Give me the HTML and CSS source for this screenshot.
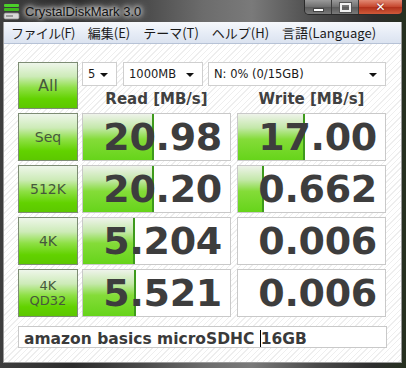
FILE: index.html
```html
<!DOCTYPE html>
<html lang="ja">
<head>
  <meta charset="UTF-8">
  <title>CrystalDiskMark 3.0</title>
  <link rel="stylesheet" href="styles.css">
</head>
<body>
  <div class="window">
    <div class="titlebar">
      <svg class="app-icon" width="17" height="17" viewBox="0 0 17 17">
        <rect x="1" y="1" width="15" height="3" rx="1" fill="#4ccf2a"/>
        <rect x="1" y="5" width="15" height="3" rx="1" fill="#3fb81e"/>
        <rect x="1" y="10" width="15" height="6" rx="1.5" fill="#d8d8d8" stroke="#8a8a8a" stroke-width="0.8"/>
        <rect x="3" y="12" width="7" height="2" fill="#9a9a9a"/>
      </svg>
      <span class="title">CrystalDiskMark 3.0</span>
      <div class="caption">
        <span class="cb min"><i></i></span>
        <span class="cb max"><i></i></span>
        <span class="cb close">✕</span>
      </div>
    </div>

    <div class="client">
      <ul class="menubar">
        <li class="first">ファイル(F)</li>
        <li>編集(E)</li>
        <li>テーマ(T)</li>
        <li>ヘルプ(H)</li>
        <li>言語(Language)</li>
      </ul>

      <div class="panel">
        <button class="test all">All</button>
        <div class="selects">
          <div class="select s-count">5<span class="arrow"></span></div>
          <div class="select s-size">1000MB<span class="arrow"></span></div>
          <div class="select s-drive">N: 0% (0/15GB)<span class="arrow"></span></div>
        </div>
        <div class="col-head read-head">Read [MB/s]</div>
        <div class="col-head write-head">Write [MB/s]</div>

        <button class="test">Seq</button>
        <div class="result"><span class="bar" style="width:47%"></span><span class="num">20.98</span></div>
        <div class="result write"><span class="bar" style="width:44%"></span><span class="num">17.00</span></div>

        <button class="test">512K</button>
        <div class="result"><span class="bar" style="width:47%"></span><span class="num">20.20</span></div>
        <div class="result write"><span class="bar" style="width:16%"></span><span class="num">0.662</span></div>

        <button class="test">4K</button>
        <div class="result"><span class="bar" style="width:34%"></span><span class="num">5.204</span></div>
        <div class="result write"><span class="num">0.006</span></div>

        <button class="test two-line">4K<br>QD32</button>
        <div class="result"><span class="bar" style="width:35%"></span><span class="num">5.521</span></div>
        <div class="result write"><span class="num">0.006</span></div>

        <div class="comment">amazon basics microSDHC <span class="caret"></span>16GB</div>
      </div>
    </div>
  </div>
</body>
</html>
```

FILE: styles.css
```css
body {
  margin: 0;
  background: #2e2e2e;
}

.window {
  width: 406px;
  height: 368px;
  display: flex;
  flex-direction: column;
  background: linear-gradient(90deg, #3e3e3e 0%, #2c2c2c 18%, #4a4a4a 35%, #6c6c6c 50%, #7a7a7a 62%, #4a4a4a 78%, #2e2e2e 92%, #26301f 100%);
}

.titlebar {
  height: 22px;
  display: flex;
  align-items: flex-start;
  flex-shrink: 0;
}

.app-icon {
  margin: 3px 0 0 3px;
}

.title {
  margin: 4px 0 0 5px;
  font: 13px "Liberation Sans", sans-serif;
  color: #111;
  text-shadow: 0 0 4px #fff, 0 0 7px #fff, 0 0 10px rgba(255,255,255,0.8);
}

.caption {
  margin: 0 3px 0 auto;
  display: flex;
  height: 14px;
  border: 1px solid #2a2a2a;
  border-top: none;
  border-radius: 0 0 5px 5px;
  overflow: hidden;
}

.cb {
  width: 26px;
  display: flex;
  align-items: center;
  justify-content: center;
  background: linear-gradient(#9a9a9a, #6f6f6f 50%, #5a5a5a 51%, #7a7a7a);
  border-right: 1px solid #3a3a3a;
}

.cb.min i {
  width: 9px;
  height: 2px;
  margin-top: 5px;
  background: #fff;
  border: 1px solid #444;
}

.cb.max i {
  width: 7px;
  height: 5px;
  border: 2px solid #f0f0f0;
  outline: 1px solid #555;
}

.cb.close {
  width: 43px;
  border-right: none;
  background: linear-gradient(#e28a74, #c5452c 50%, #b0301a 51%, #cf5a3a);
  color: #fff;
  font: bold 12px "DejaVu Sans", sans-serif;
  text-shadow: 0 0 2px #600;
}

.client {
  flex: 1;
  margin: 0 4px 5px 3px;
  border: 1px solid #9a9a9a;
  border-top: none;
  background: repeating-linear-gradient(135deg, #ffffff 0 3px, #eeeeee 3px 4px);
  display: flex;
  flex-direction: column;
}

.menubar {
  list-style: none;
  margin: 0;
  padding: 0 0 0 1px;
  height: 21px;
  display: flex;
  align-items: center;
  background: linear-gradient(#f6f8fc, #e6ecf6 55%, #dbe3f0);
  border-bottom: 1px solid #b6c2d6;
  font: 13px "Noto Sans CJK JP", sans-serif;
  color: #1a1a1a;
}

.menubar li {
  padding: 0 6px;
  margin-right: 1px;
}

.menubar li.first {
  letter-spacing: -0.6px;
}

.panel {
  display: grid;
  grid-template-columns: 60px 149px 151px;
  grid-template-rows: 24px 19px repeat(4, 48px) 27px;
  column-gap: 4px;
  row-gap: 4px;
  padding: 18px 0 0 14px;
}

.test {
  margin: 0;
  padding: 0;
  border: 1px solid #7d8c74;
  background: linear-gradient(#eef6ea 0%, #cdebb8 30%, #8ee045 55%, #62d200 80%, #5cc800 100%);
  font: 14px "DejaVu Sans", sans-serif;
  color: #46583c;
  line-height: 15px;
}

.test.all {
  grid-row: 1 / 3;
  font-size: 16px;
}

.test.two-line {
  font-size: 13px;
}

.selects {
  grid-column: 2 / 4;
  display: flex;
  gap: 6px;
}

.select {
  position: relative;
  box-sizing: border-box;
  height: 24px;
  padding-left: 5px;
  border: 1px solid #cfcfcf;
  background: #fff;
  font: 11.5px "DejaVu Sans", sans-serif;
  color: #1a1a1a;
  line-height: 22px;
}

.s-count { width: 35px; }
.s-size { width: 80px; }
.s-drive { flex: 1; margin-left: -1px; }

.arrow {
  position: absolute;
  right: 8px;
  top: 10px;
  border-left: 4px solid transparent;
  border-right: 4px solid transparent;
  border-top: 4px solid #111;
}

.col-head {
  text-align: center;
  font: bold 15px "DejaVu Sans", sans-serif;
  color: #404040;
  line-height: 19px;
}

.write-head {
  padding-left: 2px;
}

.result {
  position: relative;
  box-sizing: border-box;
  width: 149px;
  border: 1px solid #c9c9c9;
  background: #fff;
  text-align: right;
  padding-right: 8px;
}

.result.write {
  justify-self: end;
}

.bar {
  position: absolute;
  left: 0;
  top: 0;
  bottom: 0;
  background: linear-gradient(#eef3ea 0%, #c4e8aa 30%, #84dc38 55%, #66d41a 100%);
  border-right: 2px solid #3e9a1c;
}

.num {
  position: relative;
  font: bold 38px "DejaVu Sans", sans-serif;
  color: #3d3d3d;
  line-height: 46px;
  letter-spacing: -0.3px;
}

.comment {
  grid-column: 1 / 4;
  margin-top: 5px;
  width: 369px;
  box-sizing: border-box;
  border: 1px solid #c9c9c9;
  background: #fff;
  padding-left: 5px;
  font: bold 15.5px "DejaVu Sans", sans-serif;
  color: #3a3a3a;
  line-height: 25px;
}

.caret {
  display: inline-block;
  width: 1px;
  height: 17px;
  background: #000;
    vertical-align: -3px;
}
```
